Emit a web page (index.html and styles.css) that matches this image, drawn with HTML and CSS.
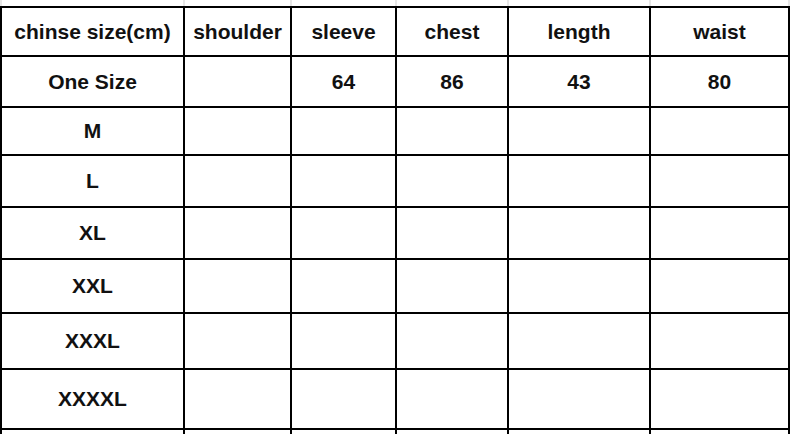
FILE: index.html
```html
<!DOCTYPE html>
<html>
<head>
<meta charset="utf-8">
<link rel="stylesheet" href="styles.css">
</head>
<body>
<div class="page">
  <div class="top-strip">
    <div></div><div></div><div></div><div></div><div></div><div></div>
  </div>
  <div class="table">
    <div class="cell">chinse size(cm)</div>
    <div class="cell">shoulder</div>
    <div class="cell">sleeve</div>
    <div class="cell">chest</div>
    <div class="cell">length</div>
    <div class="cell">waist</div>

    <div class="cell">One Size</div>
    <div class="cell"></div>
    <div class="cell">64</div>
    <div class="cell">86</div>
    <div class="cell">43</div>
    <div class="cell">80</div>

    <div class="cell">M</div>
    <div class="cell"></div><div class="cell"></div><div class="cell"></div><div class="cell"></div><div class="cell"></div>

    <div class="cell">L</div>
    <div class="cell"></div><div class="cell"></div><div class="cell"></div><div class="cell"></div><div class="cell"></div>

    <div class="cell">XL</div>
    <div class="cell"></div><div class="cell"></div><div class="cell"></div><div class="cell"></div><div class="cell"></div>

    <div class="cell">XXL</div>
    <div class="cell"></div><div class="cell"></div><div class="cell"></div><div class="cell"></div><div class="cell"></div>

    <div class="cell">XXXL</div>
    <div class="cell"></div><div class="cell"></div><div class="cell"></div><div class="cell"></div><div class="cell"></div>

    <div class="cell">XXXXL</div>
    <div class="cell"></div><div class="cell"></div><div class="cell"></div><div class="cell"></div><div class="cell"></div>

    <div class="cell"></div>
    <div class="cell"></div><div class="cell"></div><div class="cell"></div><div class="cell"></div><div class="cell"></div>
  </div>
</div>
</body>
</html>
```

FILE: styles.css
```css
html, body {
  margin: 0;
  padding: 0;
  background: #fff;
  overflow: hidden;
}

.page {
  width: 793px;
  height: 434px;
  overflow: hidden;
  font-family: "Liberation Sans", Arial, sans-serif;
}

.top-strip {
  display: grid;
  grid-template-columns: 181px 105px 103px 110px 140px 137px;
  column-gap: 2px;
  padding: 0 2px;
  width: 790px;
  box-sizing: border-box;
  height: 6px;
  background: #e6e6e6;
}

.top-strip div {
  background: #fff;
}

.table {
  display: grid;
  grid-template-columns: 181px 105px 103px 110px 140px 137px;
  grid-template-rows: 47px 49px 46px 50px 50px 52px 54px 58px 60px;
  gap: 2px;
  padding: 2px;
  width: 790px;
  box-sizing: border-box;
  background: #000;
}

.cell {
  background: #fff;
  display: flex;
  align-items: center;
  justify-content: center;
  font-size: 21px;
  font-weight: bold;
  color: #111;
}
```
